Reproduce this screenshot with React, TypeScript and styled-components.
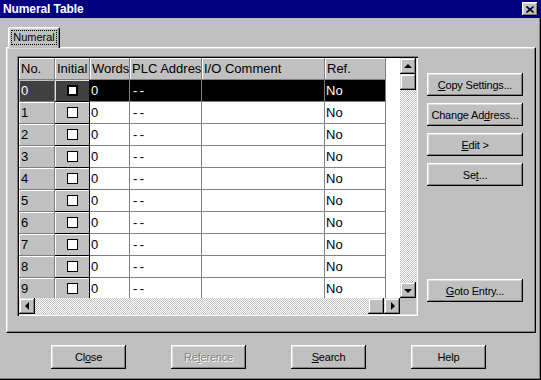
import React from 'react';
import styled, { createGlobalStyle, css } from 'styled-components';

const GlobalStyle = createGlobalStyle`
  html, body {
    margin: 0;
    padding: 0;
    background: #c0c0c0;
  }
  * {
    box-sizing: border-box;
  }
`;

const raised = css`
  box-shadow: inset -1px -1px #000, inset 1px 1px #fff, inset -2px -2px #808080,
    inset 2px 2px #dfdfdf;
`;

const Window = styled.div`
  width: 541px;
  height: 380px;
  background: #c0c0c0;
  display: flex;
  flex-direction: column;
  box-shadow: inset -1px -1px #000, inset -2px -2px #808080;
  font-family: 'Liberation Sans', Arial, sans-serif;
  overflow: hidden;
`;

const TitleBar = styled.div`
  height: 18px;
  background: #000080;
  display: flex;
  align-items: center;
  justify-content: space-between;
  padding: 0 3px 0 3px;
`;

const Title = styled.div`
  color: #fff;
  font-weight: 700;
  font-size: 12px;
  letter-spacing: -0.1px;
`;

const CloseBox = styled.div`
  width: 16px;
  height: 14px;
  background: #c0c0c0;
  display: flex;
  align-items: center;
  justify-content: center;
  ${raised}
`;

const Body = styled.div`
  padding: 9px 5px 0 6px;
`;

const TabStrip = styled.div`
  height: 20px;
  padding-left: 2px;
  display: flex;
  align-items: flex-end;
  position: relative;
  z-index: 1;
`;

const Tab = styled.div`
  width: 52px;
  height: 21px;
  margin-bottom: -1px;
  background: #c0c0c0;
  border-left: 1px solid #fff;
  border-top: 1px solid #fff;
  border-right: 1px solid #000;
  border-top-left-radius: 2px;
  border-top-right-radius: 2px;
  box-shadow: inset -1px 0 #808080, inset 1px 1px #dfdfdf;
  display: flex;
  align-items: flex-start;
  justify-content: center;
  padding-top: 2px;
`;

const TabLabel = styled.span`
  font-size: 11px;
  line-height: 13px;
  padding: 0 1px;
  border: 1px dotted #000;
`;

const Panel = styled.div`
  height: 286px;
  border-left: 1px solid #fff;
  border-top: 1px solid #fff;
  border-right: 1px solid #000;
  border-bottom: 1px solid #000;
  box-shadow: inset -1px -1px #808080, inset 1px 1px #dfdfdf;
  padding: 8px 12px 16px 10px;
  display: flex;
  gap: 9px;
`;

const Frame = styled.div`
  width: 401px;
  height: 260px;
  padding: 2px;
  box-shadow: inset 1px 1px #808080, inset 2px 2px #000, inset -1px -1px #fff,
    inset -2px -2px #dfdfdf;
  display: grid;
  grid-template-columns: 1fr 16px;
  grid-template-rows: 1fr 16px;
`;

const Table = styled.div`
  background: #fff;
  overflow: hidden;
  display: grid;
  grid-template-columns: 36px 35px 40px 72px 123px 61px;
  grid-auto-rows: 22px;
  align-content: start;
`;

const cellBase = css`
  border-right: 1px solid #808080;
  border-bottom: 1px solid #808080;
  font-size: 13px;
  padding-left: 2px;
  display: flex;
  align-items: center;
  white-space: nowrap;
  overflow: hidden;
`;

const HeadCell = styled.div`
  ${cellBase}
  background: #c0c0c0;
  box-shadow: inset 1px 1px #fff;
  color: #000;
`;

const NoCell = styled.div<{ $selected?: boolean }>`
  ${cellBase}
  background: ${(p) => (p.$selected ? '#404040' : '#c0c0c0')};
  color: ${(p) => (p.$selected ? '#fff' : '#000')};
  box-shadow: inset 1px 1px ${(p) => (p.$selected ? '#c0c0c0' : '#fff')};
`;

const InitCell = styled.div<{ $selected?: boolean }>`
  border-right: 1px solid #000;
  border-bottom: 1px solid #000;
  background: ${(p) => (p.$selected ? '#404040' : '#c0c0c0')};
  box-shadow: inset 1px 1px ${(p) => (p.$selected ? '#dfdfdf' : '#fff')};
  display: flex;
  align-items: center;
  justify-content: center;
`;

const Check = styled.span<{ $selected?: boolean }>`
  width: 11px;
  height: 11px;
  background: #fff;
  border: ${(p) => (p.$selected ? '2px' : '1px')} solid #000;
`;

const DataCell = styled.div<{ $selected?: boolean; $dash?: boolean }>`
  ${cellBase}
  background: ${(p) => (p.$selected ? '#000' : '#fff')};
  color: ${(p) => (p.$selected ? '#fff' : '#000')};
  letter-spacing: ${(p) => (p.$dash ? '2.5px' : '0')};
  padding-left: ${(p) => (p.$dash ? '3px' : '1px')};
`;

const Track = styled.div`
  background-color: #fff;
  background-image: repeating-conic-gradient(#c0c0c0 0 25%, #fff 0 50%);
  background-size: 2px 2px;
`;

const VScroll = styled(Track)`
  display: flex;
  flex-direction: column;
`;

const HScroll = styled(Track)`
  display: flex;
`;

const Fill = styled.div`
  flex: 1;
`;

const ScrollBtn = styled.div`
  width: 16px;
  height: 16px;
  flex: none;
  background: #c0c0c0;
  box-shadow: inset -1px -1px #000, inset 1px 1px #dfdfdf, inset -2px -2px #808080,
    inset 2px 2px #fff;
  display: flex;
  align-items: center;
  justify-content: center;
`;

const Corner = styled.div`
  background: #c0c0c0;
`;

const Arrow = styled.span<{ $dir: 'up' | 'down' | 'left' | 'right' }>`
  width: 0;
  height: 0;
  ${(p) =>
    p.$dir === 'up'
      ? css`
          border-left: 4px solid transparent;
          border-right: 4px solid transparent;
          border-bottom: 4px solid #000;
        `
      : p.$dir === 'down'
      ? css`
          border-left: 4px solid transparent;
          border-right: 4px solid transparent;
          border-top: 4px solid #000;
          margin-top: 1px;
        `
      : p.$dir === 'left'
      ? css`
          border-top: 4px solid transparent;
          border-bottom: 4px solid transparent;
          border-right: 4px solid #000;
        `
      : css`
          border-top: 4px solid transparent;
          border-bottom: 4px solid transparent;
          border-left: 4px solid #000;
          margin-left: 1px;
        `}
`;

const SideButtons = styled.div`
  width: 96px;
  display: flex;
  flex-direction: column;
  gap: 7px;
  padding: 17px 0 14px;
`;

const Button = styled.button<{ $disabled?: boolean; $push?: boolean }>`
  height: 23px;
  flex: none;
  border: none;
  background: #c0c0c0;
  ${raised}
  font-family: 'Liberation Sans', Arial, sans-serif;
  font-size: 11px;
  letter-spacing: -0.2px;
  padding: 0;
  color: ${(p) => (p.$disabled ? '#808080' : '#000')};
  text-shadow: ${(p) => (p.$disabled ? '1px 1px #fff' : 'none')};
  margin-top: ${(p) => (p.$push ? 'auto' : '0')};
`;

const Key = styled.span`
  text-decoration: underline;
`;

const Footer = styled.div`
  display: flex;
  gap: 45px;
  padding: 12px 0 0 51px;
`;

const FooterButton = styled(Button)`
  width: 75px;
  height: 24px;
`;

const rows = Array.from({ length: 10 }, (_, i) => i);
const headers = ['No.', 'Initial', 'Words', 'PLC Addres', 'I/O Comment', 'Ref.'];

export default function App() {
  return (
    <>
      <GlobalStyle />
      <Window>
        <TitleBar>
          <Title>Numeral Table</Title>
          <CloseBox>
            <svg width="8" height="7" viewBox="0 0 8 7">
              <path d="M0.5 0.5 L7.5 6.5 M7.5 0.5 L0.5 6.5" stroke="#000" strokeWidth="1.6" />
            </svg>
          </CloseBox>
        </TitleBar>
        <Body>
          <TabStrip>
            <Tab>
              <TabLabel>Numeral</TabLabel>
            </Tab>
          </TabStrip>
          <Panel>
            <Frame>
              <Table>
                {headers.map((h) => (
                  <HeadCell key={h}>{h}</HeadCell>
                ))}
                {rows.map((i) => {
                  const sel = i === 0;
                  return (
                    <React.Fragment key={i}>
                      <NoCell $selected={sel}>{i}</NoCell>
                      <InitCell $selected={sel}>
                        <Check $selected={sel} />
                      </InitCell>
                      <DataCell $selected={sel}>0</DataCell>
                      <DataCell $selected={sel} $dash>
                        --
                      </DataCell>
                      <DataCell $selected={sel} />
                      <DataCell $selected={sel}>No</DataCell>
                    </React.Fragment>
                  );
                })}
              </Table>
              <VScroll>
                <ScrollBtn>
                  <Arrow $dir="up" />
                </ScrollBtn>
                <ScrollBtn />
                <Fill />
                <ScrollBtn>
                  <Arrow $dir="down" />
                </ScrollBtn>
              </VScroll>
              <HScroll>
                <ScrollBtn>
                  <Arrow $dir="left" />
                </ScrollBtn>
                <Fill />
                <ScrollBtn />
                <ScrollBtn>
                  <Arrow $dir="right" />
                </ScrollBtn>
              </HScroll>
              <Corner />
            </Frame>
            <SideButtons>
              <Button>
                <Key>C</Key>opy Settings...
              </Button>
              <Button>
                Change Ad<Key>d</Key>ress...
              </Button>
              <Button>
                <Key>E</Key>dit &gt;
              </Button>
              <Button>
                Se<Key>t</Key>...
              </Button>
              <Button $push>
                <Key>G</Key>oto Entry...
              </Button>
            </SideButtons>
          </Panel>
        </Body>
        <Footer>
          <FooterButton>
            Cl<Key>o</Key>se
          </FooterButton>
          <FooterButton $disabled>
            Re<Key>f</Key>erence
          </FooterButton>
          <FooterButton>
            <Key>S</Key>earch
          </FooterButton>
          <FooterButton>Help</FooterButton>
        </Footer>
      </Window>
    </>
  );
}
